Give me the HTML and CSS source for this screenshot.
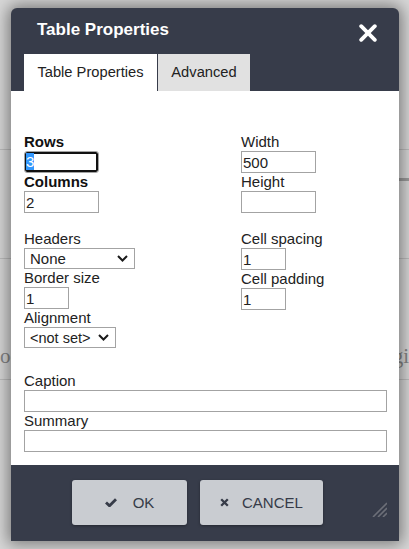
FILE: index.html
```html
<!DOCTYPE html>
<html>
<head>
<meta charset="utf-8">
<link rel="stylesheet" href="styles.css">
</head>
<body>
<div class="page">
  <div class="rule"></div>
  <div class="rule-thick"></div>
  <div class="rule rule-2"></div>
  <div class="bgtext"><span>oc</span><span>gi</span></div>
  <div class="rule rule-3"></div>
</div>

<div class="dialog">
  <div class="titlebar">
    <div class="title">Table Properties</div>
    <svg class="close" viewBox="0 0 18 18" width="18" height="18"><path d="M2.2 2.2 L15.8 15.8 M15.8 2.2 L2.2 15.8" stroke="#fff" stroke-width="3.8" stroke-linecap="round" fill="none"/></svg>
  </div>
  <div class="tabs">
    <div class="tab active tab-1">Table Properties</div>
    <div class="tab tab-2">Advanced</div>
  </div>
  <div class="body">
    <div class="cols sec-a">
      <div class="col">
        <label class="lbl b">Rows</label>
        <div class="fake"><span class="sel">3</span></div>
        <label class="lbl b">Columns</label>
        <input class="inp w75" type="text" value="2">
      </div>
      <div class="col">
        <label class="lbl">Width</label>
        <input class="inp w75" type="text" value="500">
        <label class="lbl">Height</label>
        <input class="inp w75" type="text" value="">
      </div>
    </div>
    <div class="cols sec-b">
      <div class="col">
        <label class="lbl">Headers</label>
        <div class="select w111"><span>None</span><svg viewBox="0 0 11 7" width="11" height="7"><path d="M1 1 L5.5 5.5 L10 1" stroke="#1a1a1a" stroke-width="2" fill="none"/></svg></div>
        <label class="lbl">Border size</label>
        <input class="inp w45" type="text" value="1">
        <label class="lbl">Alignment</label>
        <div class="select w92"><span>&lt;not set&gt;</span><svg viewBox="0 0 11 7" width="11" height="7"><path d="M1 1 L5.5 5.5 L10 1" stroke="#1a1a1a" stroke-width="2" fill="none"/></svg></div>
      </div>
      <div class="col">
        <label class="lbl">Cell spacing</label>
        <input class="inp w45" type="text" value="1">
        <label class="lbl">Cell padding</label>
        <input class="inp w45" type="text" value="1">
      </div>
    </div>
    <div class="sec-c">
      <label class="lbl">Caption</label>
      <input class="inp full" type="text" value="">
      <label class="lbl">Summary</label>
      <input class="inp full" type="text" value="">
    </div>
  </div>
  <div class="footer">
    <div class="btn">
      <svg class="ic-ok" viewBox="0 0 12 9" width="12" height="9"><path d="M1 4.4 L4.5 7.8 L11 1.2" stroke="#363b48" stroke-width="2.8" fill="none"/></svg>
      <span>OK</span>
    </div>
    <div class="btn">
      <svg class="ic-x" viewBox="0 0 9 9" width="9" height="9"><path d="M1.2 1.2 L7.8 7.8 M7.8 1.2 L1.2 7.8" stroke="#363b48" stroke-width="2.3" fill="none"/></svg>
      <span>CANCEL</span>
    </div>
    <svg class="grip" viewBox="0 0 15 15" width="15" height="15"><path d="M15 1 L1 15 M15 6 L6 15 M15 11 L11 15" stroke="#6c6f78" stroke-width="1.6" fill="none"/></svg>
  </div>
</div>
</body>
</html>
```
FILE: styles.css
```css
html, body {
  margin: 0;
  padding: 0;
}
body {
  width: 409px;
  height: 549px;
  overflow: hidden;
  position: relative;
  background: #d8d8d8;
  font-family: "Liberation Sans", Arial, sans-serif;
}

/* background page behind the modal */
.page {
  padding-top: 149px;
}
.rule {
  height: 1px;
  background: #bdbdbd;
}
.rule-thick {
  height: 3px;
  margin-top: 28px;
  margin-left: 390px;
  background: #9c9c9c;
}
.rule-2 {
  margin-top: 77px;
}
.bgtext {
  margin: 85px 0 0 0;
  height: 24px;
  line-height: 24px;
  display: flex;
  justify-content: space-between;
  font-family: "Liberation Serif", serif;
  font-size: 21px;
  color: #858585;
}
.rule-3 {
  margin-top: 11px;
}

/* dialog */
.dialog {
  position: absolute;
  left: 11px;
  top: 8px;
  width: 388px;
  height: 533px;
  display: flex;
  flex-direction: column;
  background: #373c4a;
  border-radius: 6px 6px 0 0;
  box-shadow: 0 0 16px 3px rgba(0, 0, 0, 0.45);
}
.titlebar {
  height: 46px;
  box-sizing: border-box;
  padding: 12px 22px 0 26px;
  display: flex;
  justify-content: space-between;
  align-items: flex-start;
}
.title {
  font-size: 17px;
  font-weight: bold;
  line-height: 20px;
  color: #fff;
}
.close {
  display: block;
  margin-top: 4px;
}
.tabs {
  height: 37px;
  display: flex;
  gap: 1px;
  padding-left: 13px;
}
.tab {
  font-size: 14.7px;
  line-height: 37px;
  text-align: center;
  color: #222;
  background: #e1e1e1;
}
.tab-1 { width: 133px; }
.tab-2 { width: 92px; }
.tab.active {
  background: #fff;
}

.body {
  flex: 1;
  background: #fff;
  padding: 42px 12px 13px 13px;
}
.cols {
  display: grid;
  grid-template-columns: 217px 1fr;
}
.sec-a {
  margin-bottom: 17px;
}
.sec-b {
  margin-bottom: 24px;
}
.col {
  display: flex;
  flex-direction: column;
  align-items: flex-start;
}
.lbl {
  display: block;
  font-size: 15px;
  line-height: 18px;
  color: #222;
}
.lbl.b {
  font-weight: bold;
  color: #111;
}
.inp {
  display: block;
  height: 22px;
  box-sizing: border-box;
  border: 1px solid #a3a3a3;
  border-radius: 0;
  padding: 1px 1px;
  margin: 0;
  font-family: "Liberation Sans", Arial, sans-serif;
  font-size: 15px;
  color: #222;
  background: #fff;
  outline: none;
}
.w75 { width: 75px; }
.w45 { width: 45px; }
.full { width: 100%; }
.fake {
  width: 75px;
  height: 22px;
  box-sizing: border-box;
  border: 1px solid #a3a3a3;
  border-radius: 3px;
  box-shadow: inset 0 0 0 2px #111;
  padding: 1px 0 0 1px;
  font-size: 15px;
  line-height: 17px;
}
.sel {
  display: inline-block;
  background: #3297fd;
  color: #fff;
  line-height: 17px;
}
.select {
  height: 21px;
  box-sizing: border-box;
  border: 1px solid #a3a3a3;
  padding: 0 6px 0 5px;
  display: flex;
  align-items: center;
  justify-content: space-between;
  font-size: 15px;
  color: #222;
}
.select svg {
  display: block;
}
.w111 { width: 111px; }
.w92 { width: 92px; font-size: 14.5px; }

.footer {
  height: 76px;
  box-sizing: border-box;
  padding: 15px 0 0 61px;
  display: flex;
  align-items: flex-start;
  gap: 13px;
  position: relative;
}
.btn {
  height: 45px;
  min-width: 115px;
  box-sizing: border-box;
  padding: 0 20px;
  display: flex;
  align-items: center;
  justify-content: center;
  background: #c9ccd1;
  border-radius: 3px;
  box-shadow: 0 1px 3px rgba(0, 0, 0, 0.35);
  font-size: 15px;
  color: #363b48;
}
.btn svg {
  display: block;
}
.ic-ok {
  margin-right: 16px;
}
.ic-x {
  margin-right: 13px;
}
.grip {
  position: absolute;
  right: 12px;
  bottom: 24px;
}
```
